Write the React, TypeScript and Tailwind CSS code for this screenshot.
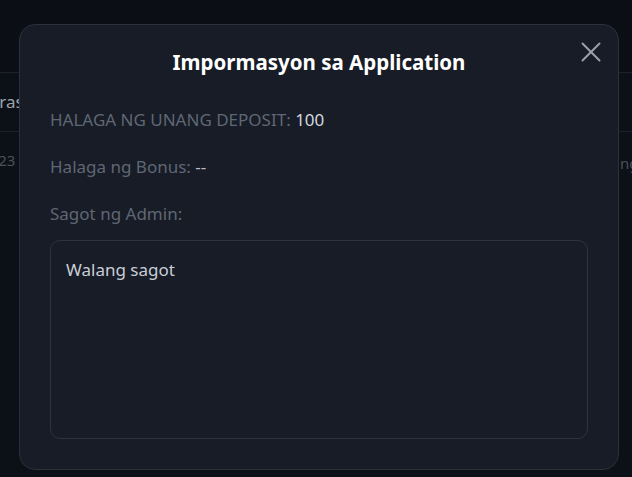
import { X } from "lucide-react";

const App = () => {
  return (
    <div
      className="relative h-[477px] w-[632px] overflow-hidden bg-[#0b0e14] text-white"
      style={{ fontFamily: '"Segoe UI", "Noto Sans", sans-serif' }}
    >
      {/* page behind the dialog */}
      <div className="h-[73px] border-b border-[#1c212b] bg-[#0b0e14]" />
      <div className="flex h-[59px] items-center bg-[#0c1017] text-[17px] text-[#9ea3ab] border-b border-[#1c212b]">
        <span className="-ml-[14px]">Oras</span>
      </div>
      <div className="flex h-[56px] items-center justify-between bg-[#0c1017] text-[15px] text-[#4b515b]">
        <span className="-ml-[19px]">2023</span>
        <span className="-mr-[22px] pt-[6px]">Tingsa</span>
      </div>
      <div className="h-full bg-[#0c1017]" />

      {/* dialog */}
      <div className="absolute inset-0 pl-[19px] pt-[24px]">
        <div className="relative flex h-[446px] w-[600px] flex-col rounded-[16px] border border-[#2a303c] bg-[#171c27] px-[30px] pt-[22px]">
          <h2 className="text-center text-[20.5px] font-bold leading-[30px] text-white">
            Impormasyon sa Application
          </h2>
          <button className="absolute right-[10px] top-[10px] text-[#9aa0aa]">
            <X className="h-[34px] w-[34px]" strokeWidth={1.4} />
          </button>
          <div className="mt-[31px] flex flex-col gap-[23px] text-[17px] leading-[24px]">
            <p className="text-[#5f6774]">
              HALAGA NG UNANG DEPOSIT: <span className="text-[#d3d7de]">100</span>
            </p>
            <p className="text-[#5f6774]">
              Halaga ng Bonus: <span className="text-[#b9bec6]">--</span>
            </p>
            <p className="text-[#5f6774]">Sagot ng Admin:</p>
          </div>
          <div className="mt-[14px] h-[199px] rounded-[10px] border border-[#2d3441] px-[15px] py-[17px] text-[17px] leading-[24px] text-[#c9ced6]">
            Walang sagot
          </div>
        </div>
      </div>
    </div>
  );
};

export default App;
